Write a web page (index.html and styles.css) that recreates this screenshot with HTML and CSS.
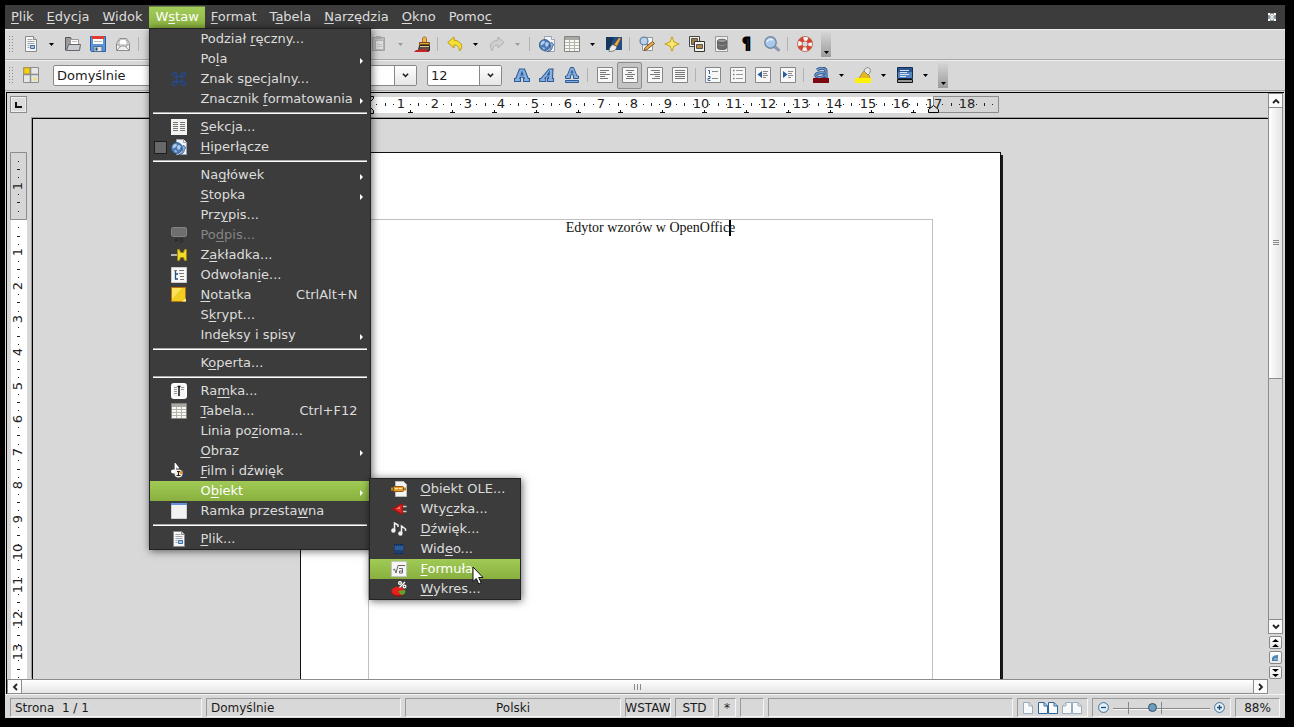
FILE: index.html
```html
<!DOCTYPE html>
<html lang="pl">
<head>
<meta charset="utf-8">
<title>Edytor wzorów w OpenOffice</title>
<link rel="stylesheet" href="styles.css">
</head>
<body>
<svg class="sprites" aria-hidden="true">
  <symbol id="i-new" viewBox="0 0 16 16"><path d="M2.500 .5h8l3 3v12h-11z" fill="#f6f6f6" stroke="#8a8a8a"/><path d="M10.500 .5v3h3" fill="#ddd" stroke="#8a8a8a"/><path d="M4.500 3.500h5M4.500 5.500h7M4.500 7.500h7M4.500 9.500h2M4.500 11.500h2" stroke="#a0a6ad"/><path d="M7.500 9.500h4v3h-4z" fill="#a9c3e2" stroke="#3f6ea5"/></symbol>
  <symbol id="i-open" viewBox="0 0 16 16"><path d="M.5 14.500v-13h5l1 2h6v4" fill="#9b9b9b" stroke="#555"/><path d="M5.500 3.500h8v6h-8z" fill="#fff" stroke="#999"/><path d="M7 5.500h5" stroke="#bbb"/><path d="M3.500 8.500h12l-1 6h-13z" fill="#c9ccd1" stroke="#666"/></symbol>
  <symbol id="i-save" viewBox="0 0 16 16"><path d="M.5 .5h15v15h-14l-1-1z" fill="#5d94d8" stroke="#2c5c9c"/><path d="M3 1h10v7H3z" fill="#fff"/><path d="M2 0h12v3H2z" fill="#e53a30"/><path d="M4 5.500h8" stroke="#bbb"/><path d="M4 10.500h8v5H4z" fill="#dde3ea" stroke="#47719f"/><path d="M5.500 11.500h2v3h-2z" fill="#345"/></symbol>
  <symbol id="i-mail" viewBox="0 0 16 16"><path d="M1.500 7.500l3-5h7l3 5v7h-13z" fill="#eee" stroke="#8b8b8b"/><path d="M4 5c3-3 6-2 8 0v4H4z" fill="#fff" stroke="#aaa"/><path d="M2 14l4-4h4l4 4M2 8l4 3M14 8l-4 3" fill="none" stroke="#999"/></symbol>
  <symbol id="i-doc" viewBox="0 0 16 16"><path d="M2.500 1.500h11v13h-11z" fill="#f6f6f6" stroke="#888"/><path d="M5 5h6M5 8h6M5 11h6" stroke="#999"/></symbol>
  <symbol id="i-paste" viewBox="0 0 16 16"><path d="M.5 1.500h12v13H.5z" fill="#c0c0c0" stroke="#a4a4a4"/><path d="M3.500 4.500h8v9h-8z" fill="#dedede" stroke="#b0b0b0"/><path d="M4 0h5v3H4z" fill="#aaa"/><path d="M5 8.500h5M5 10.500h5" stroke="#c0c0c0"/></symbol>
  <symbol id="i-brush" viewBox="0 0 16 16"><path d="M8.500 4.500v-2c0-2 4-2 4 0v4h-4z" fill="#f0b35a" stroke="#a5681c"/><path d="M5.500 6.500h10v2h-10z" fill="#e8a23f" stroke="#7c4d12"/><path d="M5.500 9.500h10v5h-11z" fill="#5a5046" stroke="#2c2520"/><path d="M6 10.500h9" stroke="#d8c79a"/><path d="M0 16l2-2h3l2-1h3l2 1 3 1v1z" fill="#c22525"/></symbol>
  <symbol id="i-undo" viewBox="0 0 16 16"><path d="M7 1L.7 6.500 7 12V9c4 0 5 2 5.500 6 5-5 1-10-5.500-11z" fill="#f5df35" stroke="#b99a18"/></symbol>
  <symbol id="i-redo" viewBox="0 0 16 16"><path d="M9 1l6 5.500L9 12V9c-4 0-5 2-5.500 6C-1 10 2 5 9 4z" fill="#cfcfcf" stroke="#b0b0b0"/></symbol>
  <symbol id="i-link" viewBox="0 0 16 16"><path d="M5.500.5h7l3 3v12h-10z" fill="#f2f4f7" stroke="#9aa2ad"/><path d="M12.500.5v3h3" fill="#fff" stroke="#9aa2ad"/><circle cx="5.800" cy="9" r="5.500" fill="#4d7ab5" stroke="#2d548a" stroke-width=".8"/><path d="M2 6l3-1.500 1 2-2 2-2.500 1zM7 6l3 1-1 3-2 1-1-3zM3 11l3 1-1 2z" fill="#b2cdeb"/><path d="M8 15.500c3-1 4-3 3.500-6L10 10l2.500-4L15 9l-1.500.500c0 4-2 6-5.500 6z" fill="#8fb1dc" stroke="#2d548a" stroke-width=".7"/></symbol>
  <symbol id="i-table" viewBox="0 0 16 16"><path d="M.5.500h15v15H.5z" fill="#f7f7f3" stroke="#85857f"/><path d="M1 1h14v3H1z" fill="#a9a9a3"/><path d="M1 6.500h14M1 9.500h14M1 12.500h14M5.500 4v11M10.500 4v11" stroke="#b4b4ad"/></symbol>
  <symbol id="i-draw" viewBox="0 0 16 16"><path d="M0 1h16v13H0z" fill="#1f4f86"/><path d="M0 1h8L3 14H0z" fill="#16365e"/><path d="M3 15.500c0-4 2-6 4-7l4 2c-1 4-3 5-8 5z" fill="#e8e8e8" stroke="#444" stroke-width=".6"/><path d="M8 8.500l5-7 2 1-4 8z" fill="#e9a54c" stroke="#7a4a12" stroke-width=".6"/></symbol>
  <symbol id="i-find" viewBox="0 0 16 16"><path d="M3.500 1.500h10v13h-10z" fill="#f7f7f7" stroke="#999"/><circle cx="5" cy="5" r="3.900" fill="#bcd3ee" stroke="#6a86a8" stroke-width="1.400"/><path d="M8 8l2 2" stroke="#777" stroke-width="2"/><path d="M5 14.500l1-3 7.500-6 2 2-7.500 6z" fill="#e6ab55" stroke="#704812" stroke-width=".9"/></symbol>
  <symbol id="i-star" viewBox="0 0 16 16"><path d="M8 .8l2 5.200 5.200 2-5.200 2-2 5.200-2-5.200-5.200-2 5.200-2z" fill="#fbe86a" stroke="#c4a11a"/></symbol>
  <symbol id="i-gallery" viewBox="0 0 16 16"><path d="M.5 .5h10v10H.5z" fill="#f4f4ea" stroke="#444"/><path d="M2.500 2.500h6v6h-6z" fill="#9b7b4a" stroke="#555"/><path d="M5.500 5.500h10v10h-10z" fill="#f4f4ea" stroke="#333"/><path d="M7.500 8.500h6v4h-6z" fill="#b98642" stroke="#555"/></symbol>
  <symbol id="i-data" viewBox="0 0 16 16"><path d="M1.500.5h12v15h-12z" fill="#eee" stroke="#999"/><path d="M3.500 5v7c0 2 9 2 9 0V5z" fill="#6c6c6c" stroke="#444" stroke-width=".7"/><ellipse cx="8" cy="5" rx="4.500" ry="1.800" fill="#999" stroke="#444" stroke-width=".7"/><path d="M4 8c1 2 7 2 8 0" fill="none" stroke="#8d8d8d"/></symbol>
  <symbol id="i-zoom" viewBox="0 0 16 16"><path d="M11 11l3.500 3" stroke="#8a99ad" stroke-width="3" stroke-linecap="round"/><circle cx="6.500" cy="6.500" r="5.700" fill="#a9c8ec" stroke="#7388a4" stroke-width="1.400"/><path d="M3 6c1-3 4-3 6-2" stroke="#e9f2fc" stroke-width="1.500" fill="none"/></symbol>
  <symbol id="i-help" viewBox="0 0 16 16"><circle cx="8" cy="8" r="5.300" fill="none" stroke="#f7f7f7" stroke-width="4.500"/><circle cx="8" cy="8" r="5.300" fill="none" stroke="#d8432f" stroke-width="4.500" stroke-dasharray="4.160 4.160" stroke-dashoffset="-2.080"/><circle cx="8" cy="8" r="7.500" fill="none" stroke="#b0523f" stroke-width=".8"/><circle cx="8" cy="8" r="3" fill="none" stroke="#b0523f" stroke-width=".8"/></symbol>
  <symbol id="i-styles" viewBox="0 0 16 16"><path d="M.5 .5h15v15H.5z" fill="#e6e6e6" stroke="#8d8d8d"/><path d="M1 1h6v6H1z" fill="#f2d21a" stroke="#c9aa10"/><path d="M7.500 0v16M0 7.500h16" stroke="#8d8d8d" stroke-width="1.500"/><path d="M10.500 10.500h3v3h-3z" fill="#f3dd62"/></symbol>
  <symbol id="i-bold" viewBox="0 0 16 16"><path fill-rule="evenodd" d="M5.500 2h5l3.700 9.500h1.300v3h-6v-3h.7l-.5-1.300H6.300l-.5 1.300h.7v3h-6v-3h1.300zM8 5L7 8h2z" fill="#86b0e2" stroke="#2d5b95" stroke-width="1.100"/></symbol>
  <symbol id="i-italic" viewBox="0 0 16 16"><path fill-rule="evenodd" d="M10 2h4l-.5 9.500h1v3H8.500v-3h1v-1.500H7l-1 1.500h.7v3H.7v-3H2zM10.300 5L8.500 8h1.700z" fill="#86b0e2" stroke="#2d5b95" stroke-width="1.100"/></symbol>
  <symbol id="i-under" viewBox="0 0 16 16"><path fill-rule="evenodd" d="M6.500 .5h3L13 9h1.500v2.500h-5V9h.5l-.5-1.200h-3L6 9h.5v2.500h-5V9H3zM8 3.500L7 6h2z" fill="#86b0e2" stroke="#2d5b95"/><path d="M1.500 13.500h13v2h-13z" fill="#86b0e2" stroke="#2d5b95"/></symbol>
  <symbol id="i-box" viewBox="0 0 16 16"><path d="M.5.5h15v15H.5z" fill="#f7f7f7" stroke="#868686"/></symbol>
  <symbol id="i-left" viewBox="0 0 16 16"><use href="#i-box"/><path d="M3 3.500h9M3 5.500h6M3 7.500h10M3 9.500h5M3 11.500h8" stroke="#777"/></symbol>
  <symbol id="i-center" viewBox="0 0 16 16"><use href="#i-box"/><path d="M4 3.500h8M6 5.500h4M3 7.500h10M5 9.500h6M4 11.500h8" stroke="#777"/></symbol>
  <symbol id="i-right" viewBox="0 0 16 16"><use href="#i-box"/><path d="M4 3.500h9M7 5.500h6M3 7.500h10M8 9.500h5M5 11.500h8" stroke="#777"/></symbol>
  <symbol id="i-just" viewBox="0 0 16 16"><use href="#i-box"/><path d="M3 3.500h10M3 5.500h10M3 7.500h10M3 9.500h10M3 11.500h10" stroke="#777"/></symbol>
  <symbol id="i-numbers" viewBox="0 0 16 16"><use href="#i-box"/><path d="M7 4.500h6M7 11.500h6" stroke="#888"/><path d="M3 3.500h1.500V7M3 9.500h2v2H3v2h2.500" fill="none" stroke="#3568a5"/></symbol>
  <symbol id="i-bullets" viewBox="0 0 16 16"><use href="#i-box"/><path d="M6 3.500h7M6 7.500h7M6 11.500h7" stroke="#999"/><path d="M3 3.500h1.500M3 7.500h1.500M3 11.500h1.500" stroke="#777" stroke-width="1.500"/></symbol>
  <symbol id="i-outdent" viewBox="0 0 16 16"><use href="#i-box"/><path d="M7 4v7L2.500 7.500z" fill="#2a5c9c"/><path d="M8 4.500h5M8 6.500h4M8 8.500h5M8 10.500h3" stroke="#888"/></symbol>
  <symbol id="i-indent" viewBox="0 0 16 16"><use href="#i-box"/><path d="M3 4v7l4.500-3.500z" fill="#2a5c9c"/><path d="M8 4.500h5M8 6.500h4M8 8.500h5M8 10.500h3" stroke="#888"/></symbol>
  <symbol id="i-color" viewBox="0 0 16 16"><path d="M4 3c4-3 9-2 9 1v6h2M12 6c-7-1-10 1-9 3s7 2 9-1" fill="none" stroke="#274f86" stroke-width="3"/><path d="M4 3c4-3 9-2 9 1v6h2M12 6c-7-1-10 1-9 3s7 2 9-1" fill="none" stroke="#7ba6da" stroke-width="1.200"/><path d="M0 11h16v5H0z" fill="#7c0910"/></symbol>
  <symbol id="i-mark" viewBox="0 0 16 16"><path d="M4 11l5-7 5 4 1 4H4z" fill="#e8b820" stroke="#a98013" stroke-width=".8"/><path d="M9 4c1-4 5-4 6-2s0 4-2 6z" fill="#e8e8e8" stroke="#888"/><path d="M0 11h16v5H0z" fill="#fff200"/></symbol>
  <symbol id="i-fill" viewBox="0 0 16 16"><path d="M.5.5h15v11H.5z" fill="#5384c0" stroke="#122f54"/><path d="M1 1h14v4H1z" fill="#2b5590"/><path d="M3 3.500h9M3 5.500h7M3 7.500h9M3 9.500h6" stroke="#d5e3f5"/><path d="M.5 12.500h15v3H.5z" fill="#999" stroke="#111"/></symbol>
  <symbol id="i-special" viewBox="0 0 16 16"><path d="M5.500 5.500h5v5h-5zM5.500 5.500H3.500A2 2 0 1 1 5.500 3.500zM10.500 5.500V3.500A2 2 0 1 1 12.500 5.500zM5.500 10.500V12.500A2 2 0 1 1 3.500 10.500zM10.500 10.500H12.500A2 2 0 1 1 10.500 12.500z" fill="none" stroke="#26488a" stroke-width="1.300"/></symbol>
  <symbol id="i-section" viewBox="0 0 16 16"><path d="M0 0h16v16H0z" fill="#f3f3ef"/><path d="M2 3.500h5M2 5.500h5M2 7.500h5M2 9.500h5M9 3.500h5M9 5.500h5M9 7.500h5M9 9.500h5M9 11.500h5M2 11.500h5" stroke="#777"/></symbol>
  <symbol id="i-caption" viewBox="0 0 16 16"><path d="M1.500.5h13l1 1v7l-1 1h-13l-1-1v-7z" fill="#6f6f6f" stroke="#838383"/><path d="M4 15l1-3.500h1L7 15M4.500 13.500h2M9.500 11.500v3.500h2l1-1-1-1 .5-1z" fill="none" stroke="#292929"/></symbol>
  <symbol id="i-pin" viewBox="0 0 16 16"><path d="M0 8h7" stroke="#ddd" stroke-width="1.500"/><path d="M6.500 2.500h2l1 3h3l1-3h2v11h-2l-1-3h-3l-1 3h-2z" fill="#f2dc28" stroke="#9c8510"/></symbol>
  <symbol id="i-ref" viewBox="0 0 16 16"><path d="M.5.5h15v15H.5z" fill="#f7f7f7" stroke="#ccc"/><path d="M3 3.500h3M8 3.500h5M8 6.500h5M9 9.500h4M9 12.500h4" stroke="#777"/><path d="M4.500 4v8H7M4.500 7H7" fill="none" stroke="#234f8c" stroke-width="1.300"/></symbol>
  <symbol id="i-note" viewBox="0 0 16 16"><path d="M.5 .5h14v14H.5z" fill="#f1cc22" stroke="#b8740c"/><path d="M1 1h10L1 12z" fill="#fbe35c"/><path d="M11 14.500l4-3v3z" fill="#fff2a0"/></symbol>
  <symbol id="i-frame" viewBox="0 0 16 16"><rect x="1" y="1" width="14" height="14" rx="2" fill="#f5f5f5" stroke="#fff" stroke-width="2"/><path d="M3 4.500h3M3 6.500h3M3 8.500h3M3 10.500h3M10 4.500h3M10 6.500h3" stroke="#999"/><path d="M8 3v10M6.500 3.500h3" stroke="#111" stroke-width="1.500"/></symbol>
  <symbol id="i-film" viewBox="0 0 16 16"><path d="M4.500 10V1.500l3 4" fill="none" stroke="#fff" stroke-width="1.800"/><ellipse cx="2.500" cy="8.500" rx="2.500" ry="2" fill="#fff"/><circle cx="7.500" cy="10.500" r="4" fill="#f7efe2"/><path d="M7.500 8v5M6 8.500h3M5.500 12.500h4" stroke="#222" stroke-width="1.200"/><circle cx="10.500" cy="9.500" r="1.700" fill="#e99120"/><path d="M12 8h2v6h-2z" fill="#24416d"/></symbol>
  <symbol id="i-float" viewBox="0 0 16 16"><path d="M.5 .5h15v15H.5z" fill="#f2f2f0" stroke="#d0d0d0"/><path d="M0 0h16v2H0z" fill="#5d92d6"/></symbol>
  <symbol id="i-ole" viewBox="0 0 16 16"><path d="M4.500.5h8l3 3v12h-11z" fill="#f4f4f4" stroke="#bbb"/><path d="M0 8h3M12 8h3" stroke="#b9872c" stroke-width="3"/><rect x="2.500" y="5.500" width="10" height="5" rx="1" fill="#e99b2b" stroke="#8e5710"/><path d="M4 7.500h3M8 7.500h3" stroke="#fff0c8"/></symbol>
  <symbol id="i-plug" viewBox="0 0 16 16"><path d="M.5 8h2L9.500 3.500h2v9h-2L2.500 8" fill="#e0251e" stroke="#a81512" stroke-width="1.300"/><path d="M12 5.500h3.500M12 10.500h3.500" stroke="#ccc" stroke-width="1.500"/><path d="M5 8l4-2.500V8z" fill="#ff8276"/></symbol>
  <symbol id="i-sound" viewBox="0 0 16 16"><path d="M3.500 9V2l3.500 2v2M10.500 12V5l4 3v2" fill="none" stroke="#f0f0f0" stroke-width="1.500"/><circle cx="2.400" cy="9.500" r="2.200" fill="#f0f0f0"/><circle cx="9.400" cy="12.500" r="2.200" fill="#f0f0f0"/></symbol>
  <symbol id="i-video" viewBox="0 0 16 16"><path d="M3 3h10v10H3z" fill="#1e4070"/><path d="M4 5h8v4H4z" fill="#2e5b97"/><path d="M3 3.500h10M3 12.500h10" stroke="#10233f" stroke-dasharray="1 1"/></symbol>
  <symbol id="i-formula" viewBox="0 0 16 16"><path d="M.5.500h15v15H.5z" fill="#f5f5f5" stroke="#c4c4c4"/><path d="M2 9l1.500-1L5 12l2-7.500h7M8 7.500h3.500v4.500h-3v-2h3" fill="none" stroke="#666"/></symbol>
  <symbol id="i-chart" viewBox="0 0 16 16"><ellipse cx="7" cy="11.500" rx="6.500" ry="4" fill="#9c100d"/><ellipse cx="7" cy="10" rx="6.500" ry="4.300" fill="#e2221b"/><path d="M7 10l7-1c1 2 0 5-4 5z" fill="#5fa32c"/><circle cx="9" cy="2" r="1.400" fill="none" stroke="#fff" stroke-width="1.300"/><circle cx="13.500" cy="5.500" r="1.400" fill="none" stroke="#fff" stroke-width="1.300"/><path d="M14 1L8.500 6.500" stroke="#fff" stroke-width="1.300"/></symbol>
  <symbol id="i-page" viewBox="0 0 10 12"><path d="M.5.500h5.500l3.500 3.500v7.500h-9z" fill="#f8f9fb" stroke="currentColor"/><path d="M6 .5V4h3.500" fill="none" stroke="currentColor"/></symbol>
  <symbol id="i-drop" viewBox="0 0 5 3"><path d="M0 0h5L2.500 3z" fill="currentColor"/></symbol>
  <symbol id="i-chev" viewBox="0 0 8 6"><path d="M1 1l3 3 3-3" fill="none" stroke="#222" stroke-width="1.800"/></symbol>
</svg>

<div class="app">
  <nav class="menubar">
    <button><u>P</u>lik</button>
    <button><u>E</u>dycja</button>
    <button><u>W</u>idok</button>
    <div class="menu-host">
      <button class="open" aria-expanded="true">W<u>s</u>taw</button>
      <ul class="menu">
        <li><button><span class="label">Podział <u>r</u>ęczny...</span></button></li>
        <li><button class="more"><span class="label">Po<u>l</u>a</span></button></li>
        <li><button><svg><use href="#i-special"/></svg><span class="label">Znak s<u>p</u>ecjalny...</span></button></li>
        <li><button class="more"><span class="label">Znacznik <u>f</u>ormatowania</span></button></li>
        <li class="rule"></li>
        <li><button><svg><use href="#i-section"/></svg><span class="label"><u>S</u>ekcja...</span></button></li>
        <li><label><input type="checkbox"><svg><use href="#i-link"/></svg><span class="label"><u>H</u>iperłącze</span></label></li>
        <li class="rule"></li>
        <li><button class="more"><span class="label">Na<u>g</u>łówek</span></button></li>
        <li><button class="more"><span class="label"><u>S</u>topka</span></button></li>
        <li><button><span class="label">Prz<u>y</u>pis...</span></button></li>
        <li><button disabled><svg><use href="#i-caption"/></svg><span class="label">Po<u>d</u>pis...</span></button></li>
        <li><button><svg><use href="#i-pin"/></svg><span class="label">Z<u>a</u>kładka...</span></button></li>
        <li><button><svg><use href="#i-ref"/></svg><span class="label">Odwołan<u>i</u>e...</span></button></li>
        <li><button><svg><use href="#i-note"/></svg><span class="label"><u>N</u>otatka</span><span class="key">CtrlAlt+N</span></button></li>
        <li><button><span class="label">S<u>k</u>rypt...</span></button></li>
        <li><button class="more"><span class="label">Ind<u>e</u>ksy i spisy</span></button></li>
        <li class="rule"></li>
        <li><button><span class="label">K<u>o</u>perta...</span></button></li>
        <li class="rule"></li>
        <li><button><svg><use href="#i-frame"/></svg><span class="label">Ra<u>m</u>ka...</span></button></li>
        <li><button><svg><use href="#i-table"/></svg><span class="label"><u>T</u>abela...</span><span class="key">Ctrl+F12</span></button></li>
        <li><button><span class="label">Linia po<u>z</u>ioma...</span></button></li>
        <li><button class="more"><span class="label"><u>O</u>braz</span></button></li>
        <li><button><svg><use href="#i-film"/></svg><span class="label"><u>F</u>ilm i dźwięk</span></button></li>
        <li class="menu-host">
          <button class="more active" aria-expanded="true"><span class="label">O<u>b</u>iekt</span></button>
          <ul class="menu submenu">
            <li><button><svg><use href="#i-ole"/></svg><span class="label"><u>O</u>biekt OLE...</span></button></li>
            <li><button><svg><use href="#i-plug"/></svg><span class="label">Wty<u>c</u>zka...</span></button></li>
            <li><button><svg><use href="#i-sound"/></svg><span class="label"><u>D</u>źwięk...</span></button></li>
            <li><button><svg><use href="#i-video"/></svg><span class="label">Wid<u>e</u>o...</span></button></li>
            <li class="menu-host"><button class="active"><svg><use href="#i-formula"/></svg><span class="label"><u>F</u>ormuła</span></button>
              <svg class="pointer" viewBox="0 0 12 19"><path d="M1 1v14.500l3.300-3 2.500 5.500 2.400-1-2.500-5.500H11z" fill="#fff" stroke="#111"/></svg></li>
            <li><button><svg><use href="#i-chart"/></svg><span class="label"><u>W</u>ykres...</span></button></li>
          </ul>
        </li>
        <li><button><svg><use href="#i-float"/></svg><span class="label">Ramka przesta<u>w</u>na</span></button></li>
        <li class="rule"></li>
        <li><button><svg><use href="#i-new"/></svg><span class="label"><u>P</u>lik...</span></button></li>
      </ul>
    </div>
    <button><u>F</u>ormat</button>
    <button>T<u>a</u>bela</button>
    <button><u>N</u>arzędzia</button>
    <button><u>O</u>kno</button>
    <button>Pomo<u>c</u></button>
    <button class="close" aria-label="Zamknij"><svg viewBox="0 0 8 8"><rect width="8" height="8" rx="1" fill="#8b9398"/><path d="M0 0h2v2H0zM6 0h2v2H6zM0 6h2v2H0zM6 6h2v2H6zM3 1h2v1H3zM3 6h2v1H3z" fill="#fff"/><path d="M2 2l4 4M6 2L2 6" stroke="#e8ecee" stroke-width="1.500"/></svg></button>
  </nav>

  <div class="toolbar">
    <span class="grip"></span>
    <button class="tool" aria-label="Nowy"><svg><use href="#i-new"/></svg></button><button class="drop" aria-label="Nowy, lista"><svg><use href="#i-drop"/></svg></button>
    <button class="tool" aria-label="Otwórz"><svg><use href="#i-open"/></svg></button>
    <button class="tool" aria-label="Zapisz"><svg><use href="#i-save"/></svg></button>
    <button class="tool" aria-label="Wyślij"><svg><use href="#i-mail"/></svg></button>
    <span class="sep"></span>
    <button class="tool" aria-label="Edytuj"><svg><use href="#i-doc"/></svg></button>
    <span class="sep"></span>
    <button class="tool" aria-label="PDF"><svg><use href="#i-doc"/></svg></button>
    <button class="tool" aria-label="Drukuj"><svg><use href="#i-doc"/></svg></button>
    <button class="tool" aria-label="Podgląd"><svg><use href="#i-find"/></svg></button>
    <span class="sep"></span>
    <button class="tool" aria-label="Pisownia"><svg><use href="#i-doc"/></svg></button>
    <button class="tool" aria-label="Autopisownia"><svg><use href="#i-doc"/></svg></button>
    <span class="sep"></span>
    <button class="tool" aria-label="Wytnij"><svg><use href="#i-doc"/></svg></button>
    <button class="tool" aria-label="Kopiuj"><svg><use href="#i-doc"/></svg></button>
    <button class="tool" aria-label="Wklej"><svg><use href="#i-paste"/></svg></button><button class="drop off" aria-label="Wklej, lista"><svg><use href="#i-drop"/></svg></button>
    <button class="tool" aria-label="Pędzel"><svg><use href="#i-brush"/></svg></button>
    <span class="sep"></span>
    <button class="tool" aria-label="Cofnij"><svg><use href="#i-undo"/></svg></button><button class="drop" aria-label="Cofnij, lista"><svg><use href="#i-drop"/></svg></button>
    <button class="tool" aria-label="Przywróć"><svg><use href="#i-redo"/></svg></button><button class="drop off" aria-label="Przywróć, lista"><svg><use href="#i-drop"/></svg></button>
    <span class="sep"></span>
    <button class="tool" aria-label="Hiperłącze"><svg><use href="#i-link"/></svg></button>
    <button class="tool" aria-label="Tabela"><svg><use href="#i-table"/></svg></button><button class="drop" aria-label="Tabela, lista"><svg><use href="#i-drop"/></svg></button>
    <button class="tool" aria-label="Rysunek"><svg><use href="#i-draw"/></svg></button>
    <span class="sep"></span>
    <button class="tool" aria-label="Znajdź"><svg><use href="#i-find"/></svg></button>
    <button class="tool" aria-label="Nawigator"><svg><use href="#i-star"/></svg></button>
    <button class="tool" aria-label="Galeria"><svg><use href="#i-gallery"/></svg></button>
    <button class="tool" aria-label="Źródła danych"><svg><use href="#i-data"/></svg></button>
    <button class="tool pilcrow">¶</button>
    <button class="tool" aria-label="Powiększenie"><svg><use href="#i-zoom"/></svg></button>
    <span class="sep"></span>
    <button class="tool" aria-label="Pomoc"><svg><use href="#i-help"/></svg></button>
    <button class="overflow" aria-label="Więcej"><svg><use href="#i-drop"/></svg></button>
  </div>

  <div class="toolbar">
    <span class="grip"></span>
    <button class="tool" aria-label="Style"><svg><use href="#i-styles"/></svg></button>
    <span class="combo style"><select aria-label="Styl"><option>Domyślnie</option></select><svg><use href="#i-chev"/></svg></span>
    <span class="combo font"><select aria-label="Czcionka"><option>Times New Roman</option></select><svg><use href="#i-chev"/></svg></span>
    <span class="combo size"><select aria-label="Rozmiar"><option>12</option></select><svg><use href="#i-chev"/></svg></span>
    <button class="tool" aria-label="Pogrubienie"><svg><use href="#i-bold"/></svg></button>
    <button class="tool" aria-label="Kursywa"><svg><use href="#i-italic"/></svg></button>
    <button class="tool" aria-label="Podkreślenie"><svg><use href="#i-under"/></svg></button>
    <span class="sep"></span>
    <button class="tool" aria-label="Do lewej"><svg><use href="#i-left"/></svg></button>
    <button class="tool pressed" aria-label="Do środka"><svg><use href="#i-center"/></svg></button>
    <button class="tool" aria-label="Do prawej"><svg><use href="#i-right"/></svg></button>
    <button class="tool" aria-label="Wyjustuj"><svg><use href="#i-just"/></svg></button>
    <span class="sep"></span>
    <button class="tool" aria-label="Numerowanie"><svg><use href="#i-numbers"/></svg></button>
    <button class="tool" aria-label="Wypunktowanie"><svg><use href="#i-bullets"/></svg></button>
    <button class="tool" aria-label="Zmniejsz wcięcie"><svg><use href="#i-outdent"/></svg></button>
    <button class="tool" aria-label="Zwiększ wcięcie"><svg><use href="#i-indent"/></svg></button>
    <span class="sep"></span>
    <button class="tool" aria-label="Kolor czcionki"><svg><use href="#i-color"/></svg></button><button class="drop" aria-label="Kolor, lista"><svg><use href="#i-drop"/></svg></button>
    <button class="tool" aria-label="Wyróżnienie"><svg><use href="#i-mark"/></svg></button><button class="drop" aria-label="Wyróżnienie, lista"><svg><use href="#i-drop"/></svg></button>
    <button class="tool" aria-label="Kolor tła"><svg><use href="#i-fill"/></svg></button><button class="drop" aria-label="Tło, lista"><svg><use href="#i-drop"/></svg></button>
    <button class="overflow" aria-label="Więcej"><svg><use href="#i-drop"/></svg></button>
  </div>

  <main class="work">
    <div class="corner"><button class="tab-kind" aria-label="Tabulator"><svg viewBox="0 0 7 6"><path d="M1 0v5h6" fill="none" stroke="#111" stroke-width="2"/></svg></button></div>
    <div class="hruler"><svg id="hruler"></svg></div>
    <div class="vruler"><svg id="vruler"></svg></div>
    <div class="desk">
      <div class="paper"><div class="frame"><p>Edytor wzorów w OpenOffic<span class="caret"></span>e</p></div></div>
    </div>
    <div class="vscroll">
      <button class="arrow" aria-label="W górę"><svg class="up"><use href="#i-chev"/></svg></button>
      <div class="track"><div class="thumb"><i></i><i></i><i></i></div></div>
      <button class="arrow" aria-label="W dół"><svg><use href="#i-chev"/></svg></button>
      <button class="jump" aria-label="Poprzednia strona"><svg viewBox="0 0 7 8"><path d="M3.500 0L7 3H0zM3.500 5L7 8H0z"/></svg></button>
      <button class="jump" aria-label="Nawigacja"><svg viewBox="0 0 7 8"><path d="M0 7V4q1-3 6-3v6z" fill="#4d86b5"/><path d="M2 5h4" stroke="#bcd"/></svg></button>
      <button class="jump" aria-label="Następna strona"><svg viewBox="0 0 7 8"><path d="M3.500 3L7 0H0zM3.500 8L7 5H0z"/></svg></button>
    </div>
    <div class="hscroll">
      <button class="arrow" aria-label="W lewo"><svg class="west"><use href="#i-chev"/></svg></button>
      <div class="thumb"><i></i><i></i><i></i></div>
      <button class="arrow" aria-label="W prawo"><svg class="east"><use href="#i-chev"/></svg></button>
    </div>
  </main>

  <footer class="status">
    <span class="cell">Strona &nbsp;1 / 1</span>
    <span class="cell">Domyślnie</span>
    <span class="cell mid">Polski</span>
    <span class="cell mid">WSTAW</span>
    <span class="cell mid">STD</span>
    <span class="cell mid">*</span>
    <span class="cell"></span>
    <span class="cell"></span>
    <span class="cell views">
      <button aria-label="Jedna strona"><svg><use href="#i-page"/></svg></button>
      <button class="on" aria-label="Wiele stron"><svg><use href="#i-page"/></svg><svg><use href="#i-page"/></svg></button>
      <button aria-label="Książka"><svg class="flip"><use href="#i-page"/></svg><svg><use href="#i-page"/></svg></button>
    </span>
    <span class="cell zoom">
      <button aria-label="Pomniejsz"><svg viewBox="0 0 11 11"><circle cx="5.500" cy="5.500" r="4.900" fill="#e4f0f9" stroke="#3f6d91"/><path d="M3 5.500h5" stroke="#1c4d77" stroke-width="1.300"/></svg></button>
      <input type="range" min="0" max="100" value="40" aria-label="Powiększenie">
      <button aria-label="Powiększ"><svg viewBox="0 0 11 11"><circle cx="5.500" cy="5.500" r="4.900" fill="#e4f0f9" stroke="#3f6d91"/><path d="M3 5.500h5M5.500 3v5" stroke="#1c4d77" stroke-width="1.300"/></svg></button>
    </span>
    <span class="cell mid">88%</span>
  </footer>
</div>
<script src="rulers.js"></script>
</body>
</html>
```
FILE: styles.css
```css
* { box-sizing: border-box; }
body {
  margin: 0;
  padding: 5px 9px 9px 5px;
  height: 100vh;
  background: #000;
  color: #1c1c1c;
  font: 13px/20px "DejaVu Sans", sans-serif;
  overflow: hidden;
}
button {
  border: 0;
  padding: 0;
  background: none;
  color: inherit;
  font: inherit;
}
svg { display: block; }
u { text-underline-offset: 2px; text-decoration-thickness: 1px; }
.sprites { position: absolute; width: 0; height: 0; }
.app { display: flex; flex-direction: column; height: 100%; background: #d8d8d8; }

/* menu bar */
.menubar { display: flex; height: 24px; background: #3c3c3c; color: #dcdcdc; }
.menubar > button, .menubar > .menu-host > button { height: 24px; padding: 0 7px 0 6px; }
.menu-host { position: relative; }
.menubar > .menu-host > .open {
  padding-right: 6px;
  background: linear-gradient(#3c3c3c 1px, #a2cc58 2px, #8ab13f);
  color: #fff;
}
.menubar > .close { margin-left: auto; padding: 0 9px; }
.close svg { width: 8px; height: 8px; }

.menu {
  position: absolute;
  z-index: 10;
  top: 23px;
  left: 0;
  width: 222px;
  margin: 0;
  padding: 0;
  list-style: none;
  background: #3c3c3c;
  border: 1px solid #222;
  box-shadow: 1px 1px 8px rgba(0, 0, 0, .6);
  color: #dcdcdc;
}
.submenu { top: -3px; left: 219px; width: 152px; }
.menu button, .menu label {
  display: grid;
  grid-template-columns: 17px 16px 1fr auto 9px;
  align-items: center;
  width: 100%;
  height: 20px;
  padding: 0 4px;
  text-align: left;
  white-space: nowrap;
}
.menu button svg, .menu label svg { grid-column: 2; grid-row: 1; width: 16px; height: 16px; }
.menu .label { grid-column: 3; grid-row: 1; padding-left: 13px; }
.menu .key { grid-column: 4; }
.menu input {
  appearance: none;
  width: 13px;
  height: 13px;
  margin: 0;
  background: #686868;
  border: 1px solid #1e1e1e;
}
.menu .more::after {
  content: "";
  grid-column: 5;
  grid-row: 1;
  justify-self: center;
  margin-top: 3px;
  border: 3px solid transparent;
  border-left-color: #fff;
  border-right-width: 0;
}
.menu .active { background: linear-gradient(#a0ca55, #89b03f); color: #fff; }
.menu button:disabled { color: #858585; }
.rule { height: 8px; padding: 3px; }
.rule::before { content: ""; display: block; height: 2px; background: linear-gradient(#aaa 1px, #fff 1px); }
.pointer { position: absolute; left: 102px; top: 7px; width: 12px; height: 19px; }

/* toolbars */
.toolbar {
  display: flex;
  align-items: center;
  flex: none;
  height: 31px;
  padding-left: 3px;
  border-bottom: 1px solid #a8a8a8;
  box-shadow: inset 0 1px #ececec;
}
.toolbar > * { flex: none; }
.grip {
  width: 6px;
  height: 18px;
  margin-right: 4px;
  background: radial-gradient(circle, #8a8a8a 1px, transparent 1px) 0 0 / 3px 3px;
}
.tool { display: grid; place-items: center; width: 25px; height: 27px; }
.tool svg { width: 16px; height: 16px; }
.pressed { background: #c4c4c4; border: 1px solid #8c8c8c; border-radius: 2px; }
.pilcrow { font-size: 15px; color: #000; -webkit-text-stroke: 1px #000; }
.drop { display: grid; place-items: center; width: 17px; height: 27px; color: #000; }
.drop svg, .overflow svg { width: 5px; height: 3px; }
.off { color: #999; }
.sep { width: 1px; height: 14px; margin: 0 4px 0 3px; background: #b2b2b2; }
.overflow {
  display: grid;
  place-items: end center;
  align-self: end;
  width: 10px;
  height: 25px;
  margin: 0 0 2px 4px;
  padding-bottom: 3px;
  background: linear-gradient(#d4d4d4, #9c9c9c);
  color: #000;
}
.combo {
  display: grid;
  grid-template-columns: 1fr 22px;
  height: 21px;
  margin-right: 10px;
  background: #fff;
  border: 1px solid #888;
  border-radius: 2px;
}
.combo select {
  grid-area: 1 / 1 / 2 / 3;
  appearance: none;
  min-width: 0;
  padding: 0 3px;
  border: 0;
  background: none;
  color: #1c1c1c;
  font: inherit;
}
.combo svg {
  grid-area: 1 / 2;
  width: 22px;
  height: 19px;
  padding: 6px 7px;
  background: linear-gradient(#fff, #e6e6e6);
  border-left: 1px solid #888;
  pointer-events: none;
}
.style { width: 166px; margin-left: 10px; }
.font { width: 188px; }
.size { width: 75px; margin-right: 7px; }

/* working area */
.work {
  display: grid;
  grid-template: 25px minmax(0, 1fr) 15px / 25px minmax(0, 1fr) 16px;
  flex: 1;
  min-height: 0;
  margin: 1px 1px 0;
  border: solid #000;
  border-width: 1px 0 0 1px;
}
.corner { padding: 3px; }
.tab-kind {
  display: grid;
  place-items: center;
  width: 17px;
  height: 17px;
  background: #dcdcdc;
  border: 1px solid #8c8c8c;
  outline: 1px solid #eee;
  outline-offset: -2px;
}
.tab-kind svg { width: 7px; height: 6px; }
.hruler { display: flex; justify-content: center; overflow: hidden; }
.hruler svg { flex: none; width: 701px; height: 24px; margin-left: 1px; overflow: visible; }
.vruler { grid-area: 2 / 1; overflow: hidden; }
.vruler svg { width: 25px; height: 1100px; }
.hruler text, .vruler text { font-size: 13px; fill: #222; text-anchor: middle; }
.desk {
  grid-area: 2 / 2;
  border: solid #000;
  border-width: 1px 0 0 1px;
  box-shadow: -1px -1px #9c9c9c;
  overflow: hidden;
}
.paper {
  width: 701px;
  height: 990px;
  margin: 33px auto 0;
  padding: 66px 67px;
  background: #fff;
  border: 1px solid #111;
  box-shadow: 2px 3px #1a1a1a;
}
.frame { height: 100%; border: 1px solid #c0c0c0; }
.frame p {
  margin: 0;
  text-align: center;
  font: 14px/16px "Liberation Serif", serif;
  color: #111;
}
.caret { display: inline-block; width: 2px; height: 16px; margin-right: -2px; background: #000; vertical-align: top; }

.vscroll { grid-area: 1 / 3 / 4 / 4; display: flex; flex-direction: column; padding-bottom: 15px; }
.arrow {
  display: grid;
  place-items: center;
  flex: none;
  width: 15px;
  height: 15px;
  background: #fafafa;
  border: 1px solid #8c8c8c;
}
.arrow svg { width: 8px; height: 6px; }
.up { transform: rotate(180deg); }
.west { transform: rotate(90deg); }
.east { transform: rotate(-90deg); }
.track { flex: 1; width: 15px; background: #dadada; border: solid #8c8c8c; border-width: 0 1px; }
.thumb { display: flex; align-items: center; justify-content: center; gap: 2px; border: solid #8c8c8c; }
.thumb i { background: #888; }
.vscroll .thumb {
  flex-direction: column;
  gap: 1px;
  height: 53%;
  border-width: 0 0 1px;
  background: linear-gradient(90deg, #fff, #e4e4e4);
}
.vscroll i { width: 6px; height: 1px; }
.jump {
  display: grid;
  place-items: center;
  flex: none;
  width: 13px;
  height: 13px;
  margin: 2px 1px 0;
  background: linear-gradient(#fff, #e8e8e8);
  border: 1px solid #888;
  border-radius: 2px;
}
.jump svg { width: 7px; height: 8px; }
.hscroll { grid-area: 3 / 1 / 4 / 3; display: flex; }
.hscroll .thumb { flex: 1; border-width: 1px 0; background: linear-gradient(#fff, #e4e4e4); }
.hscroll i { width: 1px; height: 6px; }

/* status bar */
.status {
  display: grid;
  grid-template-columns: 192px 195px 216px 46px 39px 18px 24px 1fr 71px 139px 45px;
  gap: 4px;
  flex: none;
  height: 24px;
  padding: 3px 5px 1px;
  border-top: 1px solid #f2f2f2;
  font-size: 12px;
}
.status .cell {
  padding: 0 4px;
  border: 1px solid #f5f5f5;
  border-top-color: #999;
  border-left-color: #999;
  line-height: 19px;
  white-space: nowrap;
  overflow: hidden;
}
.status .mid { display: flex; justify-content: center; padding: 0; }
.status .views, .status .zoom { display: flex; align-items: center; justify-content: space-between; padding: 0 5px; }
.views button { display: flex; color: #9aabbd; }
.views .on { color: #2f6499; }
.views svg { width: 10px; height: 12px; }
.flip { transform: scaleX(-1); }
.zoom svg { width: 11px; height: 11px; }
.zoom input {
  appearance: none;
  width: 97px;
  height: 12px;
  margin: 0;
  background:
    linear-gradient(#888, #888) 15px 0 / 1px 12px no-repeat,
    linear-gradient(#888, #888) 48px 0 / 1px 12px no-repeat,
    linear-gradient(#888 1px, #f5f5f5 1px) 0 6px / 100% 2px no-repeat;
}
.zoom input::-webkit-slider-thumb {
  appearance: none;
  width: 9px;
  height: 9px;
  background: #6f9db8;
  border: 1px solid #2c536e;
  border-radius: 50%;
}
```
FILE: rulers.js
```js
// Draws the horizontal and vertical rulers, one number per centimetre.
const CM = 33.3;

function marks(from, to, put) {
  let out = '';
  for (let n = from; n <= to; n++) out += put(n);
  return out;
}

document.getElementById('hruler').innerHTML = (() => {
  const zero = 68;
  let s = `<path d="M0.500 3.500h68v16h-68zM633.500 3.500h65v16h-65z" fill="#d6d6d6" stroke="#8c8c8c"/>
    <path d="M69 4h564v16H69z" fill="#fff"/>`;
  s += marks(0, 18, n => {
    const x = zero + n * CM;
    const at = d => Math.round(x + d);
    const label = n ? `<text x="${Math.round(x)}" y="15">${n}</text>` : '';
    return label + `<path d="M${at(CM / 4)} 11h1v1h-1zM${at(CM / 2)} 10h1v3h-1zM${at(CM * 0.75)} 11h1v1h-1z" fill="#222"/>`;
  });
  for (let k = 1; k <= 13; k++) {
    const x = Math.round(zero + k * CM * 1.26);
    s += `<path d="M${x} 17h1v2h2v1h-5v-1h2z" fill="#111"/>`;
  }
  s += '<path d="M63.500 3.500h10v2l-5 5-5-5zM63.500 20.500v-3l5-5 5 5v3z" fill="#ddd" stroke="#000"/>';
  s += '<path d="M628.500 19.500v-3l5-4 5 4v3z" fill="#ddd" stroke="#000"/>';
  return s;
})();

document.getElementById('vruler').innerHTML = (() => {
  const zero = 101;
  let s = '<path d="M3.500 34.500h16v67h-16z" fill="#d6d6d6" stroke="#8c8c8c"/><path d="M4 102h16v900H4z" fill="#fff"/>';
  s += marks(-2, 13, n => {
    const y = zero + n * CM;
    const at = d => Math.round(y + d);
    const label = n && n > -2 ? `<text transform="translate(15 ${Math.round(y)}) rotate(-90)">${Math.abs(n)}</text>` : '';
    return label + `<path d="M11 ${at(CM / 4)}h1v1h-1zM10 ${at(CM / 2)}h3v1h-3zM11 ${at(CM * 0.75)}h1v1h-1z" fill="#222"/>`;
  });
  return s;
})();
```
